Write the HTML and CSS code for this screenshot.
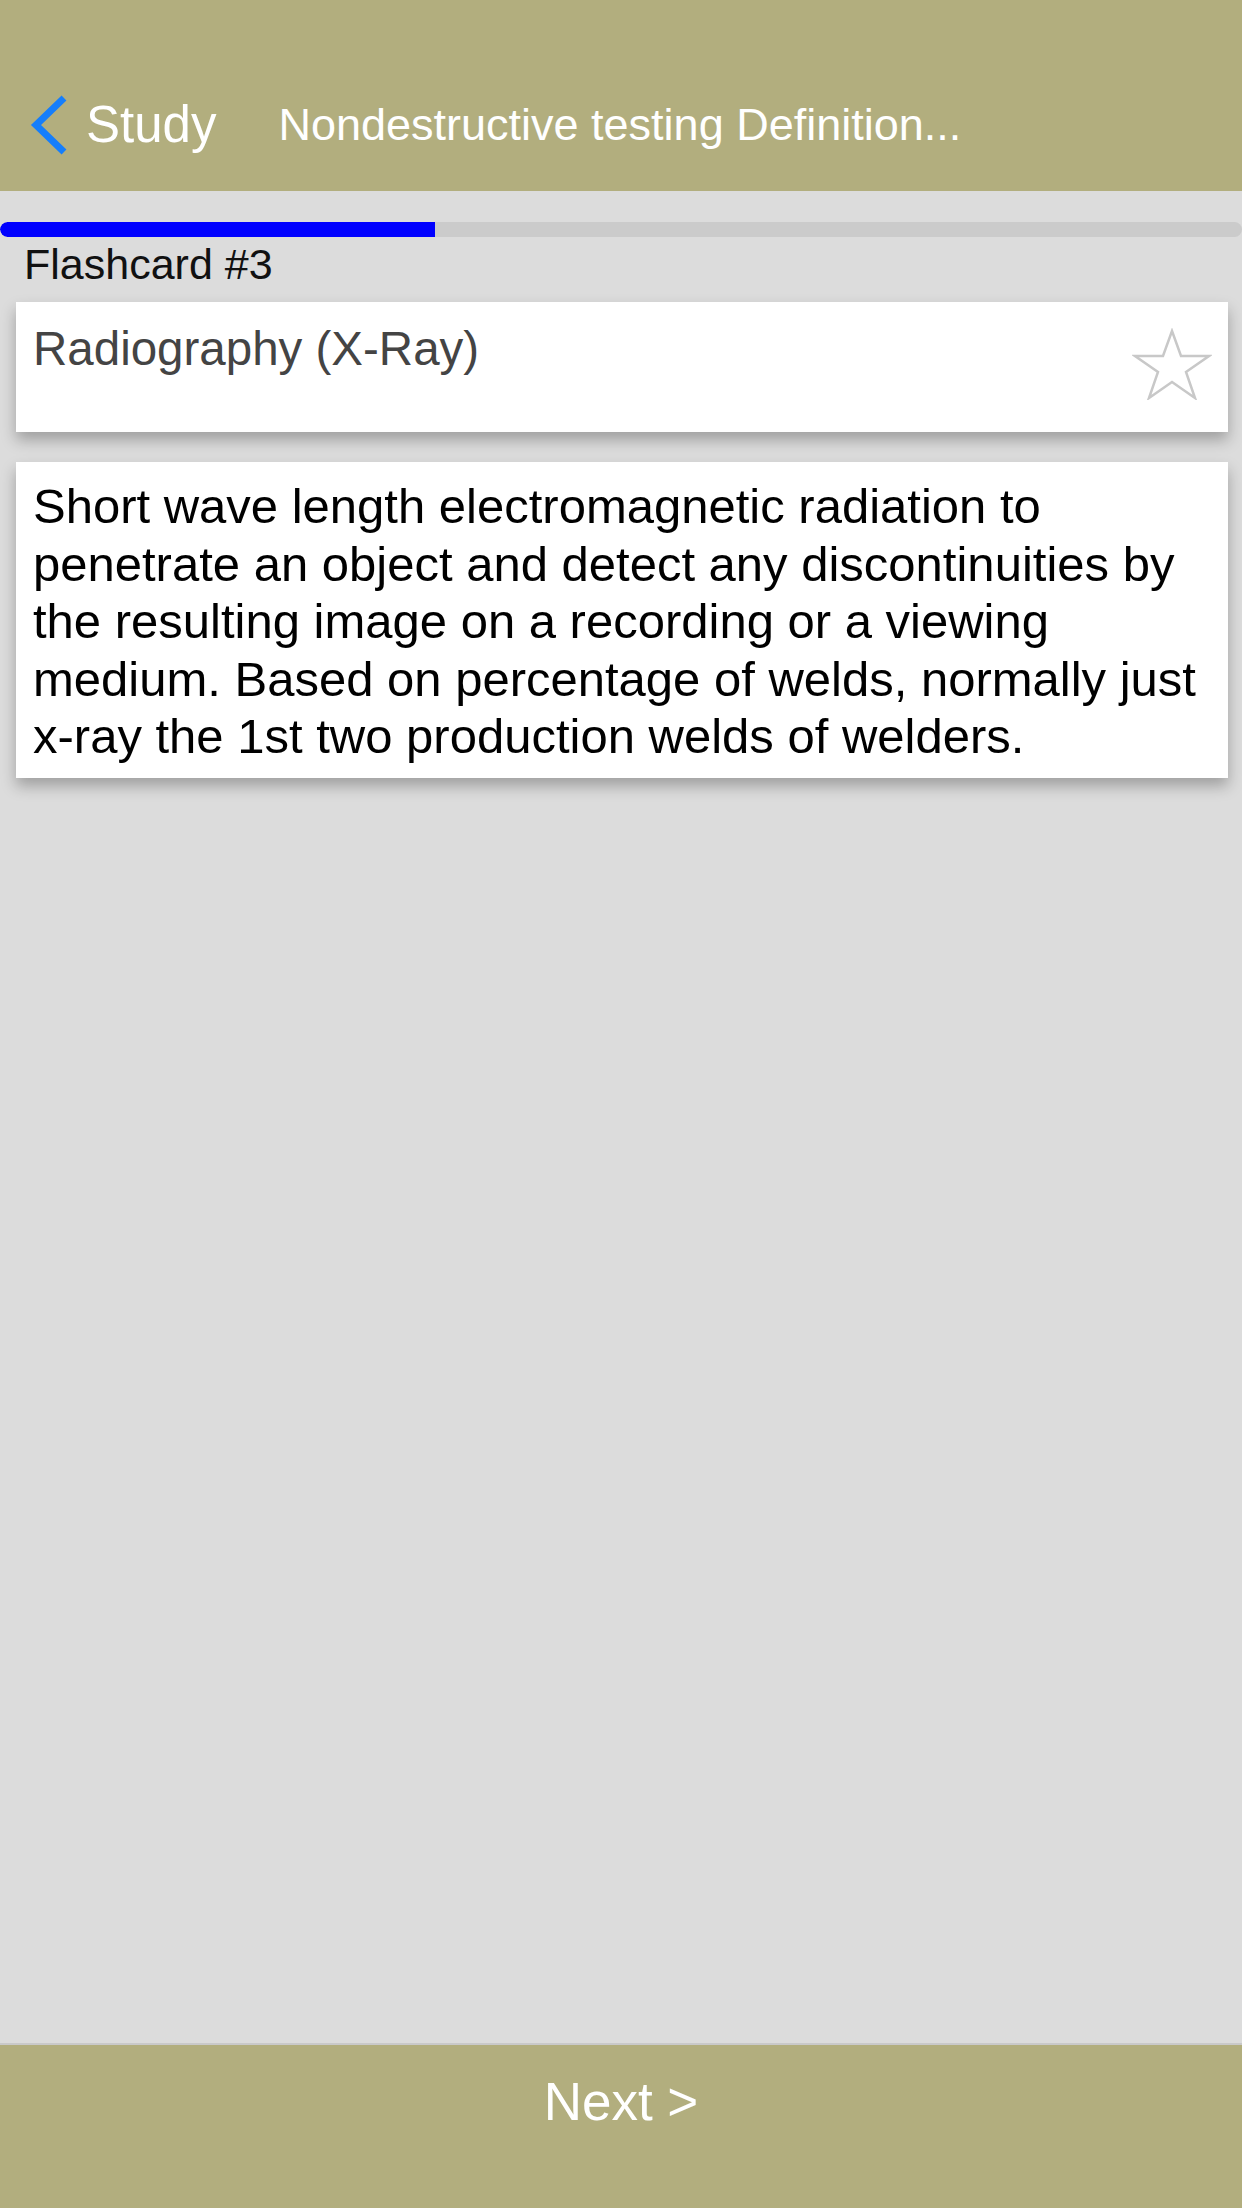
FILE: index.html
```html
<!DOCTYPE html>
<html>
<head>
<meta charset="utf-8">
<link rel="stylesheet" href="styles.css">
</head>
<body>
<div class="app">
  <header class="topbar">
    <div class="nav">
      <div class="back">
        <svg class="chev" width="40" height="62" viewBox="0 0 40 62"><polyline points="35,4 7,31 35,58" fill="none" stroke="#157efb" stroke-width="7"/></svg>
        <span class="back-label">Study</span>
      </div>
      <div class="title">Nondestructive testing Definition...</div>
    </div>
  </header>
  <div class="progress"><div class="progress-fill" style="width:435px"></div></div>
  <div class="label">Flashcard #3</div>
  <div class="card term-card">
    <div class="term">Radiography (X-Ray)</div>
    <svg class="star" width="80" height="72" viewBox="0 0 80 72"><polygon points="40,3 49,28 77,28 54,44 63,70 40,54 17,70 26,44 3,28 31,28" fill="none" stroke="#c8c8c8" stroke-width="2.5" stroke-linejoin="miter"/></svg>
  </div>
  <div class="card def-card">
    <div class="def">Short wave length electromagnetic radiation to penetrate an object and detect any discontinuities by the resulting image on a recording or a viewing medium. Based on percentage of welds, normally just x-ray the 1st two production welds of welders.</div>
  </div>
  <div class="spacer"></div>
  <footer class="bottombar">Next &gt;</footer>
</div>
</body>
</html>
```
FILE: styles.css
```css
html, body {
  margin: 0;
  padding: 0;
}
body {
  width: 1242px;
  height: 2208px;
  background: #dcdcdc;
  font-family: "Liberation Sans", Arial, sans-serif;
  overflow: hidden;
}
.app {
  display: flex;
  flex-direction: column;
  height: 2208px;
}
.topbar {
  height: 191px;
  background: #b2ae7e;
  box-sizing: border-box;
  padding-top: 94px;
  flex-shrink: 0;
}
.nav {
  display: flex;
  align-items: center;
  height: 62px;
}
.back {
  display: flex;
  align-items: center;
  padding-left: 29px;
  height: 62px;
}
.chev {
  display: block;
}
.back-label {
  color: #fff;
  font-size: 51px;
  margin-left: 17px;
  line-height: 62px;
}
.title {
  color: #fff;
  font-size: 45px;
  margin-left: 62px;
  line-height: 62px;
}
.progress {
  margin-top: 31px;
  height: 15px;
  background: #cbcbcb;
  border-radius: 8px;
  overflow: hidden;
  flex-shrink: 0;
}
.progress-fill {
  height: 100%;
  background: #0000ff;
  border-radius: 8px 0 0 8px;
}
.label {
  font-size: 43px;
  color: #111;
  padding-left: 24px;
  line-height: 48px;
  margin-top: 3px;
  height: 62px;
  flex-shrink: 0;
}
.card {
  background: #fff;
  margin: 0 14px 0 16px;
  box-shadow: 0 8px 14px rgba(0, 0, 0, 0.28);
  box-sizing: border-box;
  flex-shrink: 0;
}
.term-card {
  height: 130px;
  display: flex;
  justify-content: space-between;
  align-items: flex-start;
  padding: 21px 16px 0 17px;
}
.term {
  font-size: 47.5px;
  color: #444;
  line-height: 52px;
}
.star {
  margin-top: 5px;
  display: block;
}
.def-card {
  margin-top: 30px;
  height: 316px;
  padding: 16px 12px 0 17px;
}
.def {
  font-size: 49px;
  color: #000;
  line-height: 57.5px;
}
.spacer {
  flex: 1;
}
.bottombar {
  height: 165px;
  flex-shrink: 0;
  background: #b2ae7e;
  border-top: 2px solid #c9c9c9;
  box-sizing: border-box;
  color: #fff;
  font-size: 53px;
  text-align: center;
  padding-top: 27px;
  line-height: 60px;
}
```
